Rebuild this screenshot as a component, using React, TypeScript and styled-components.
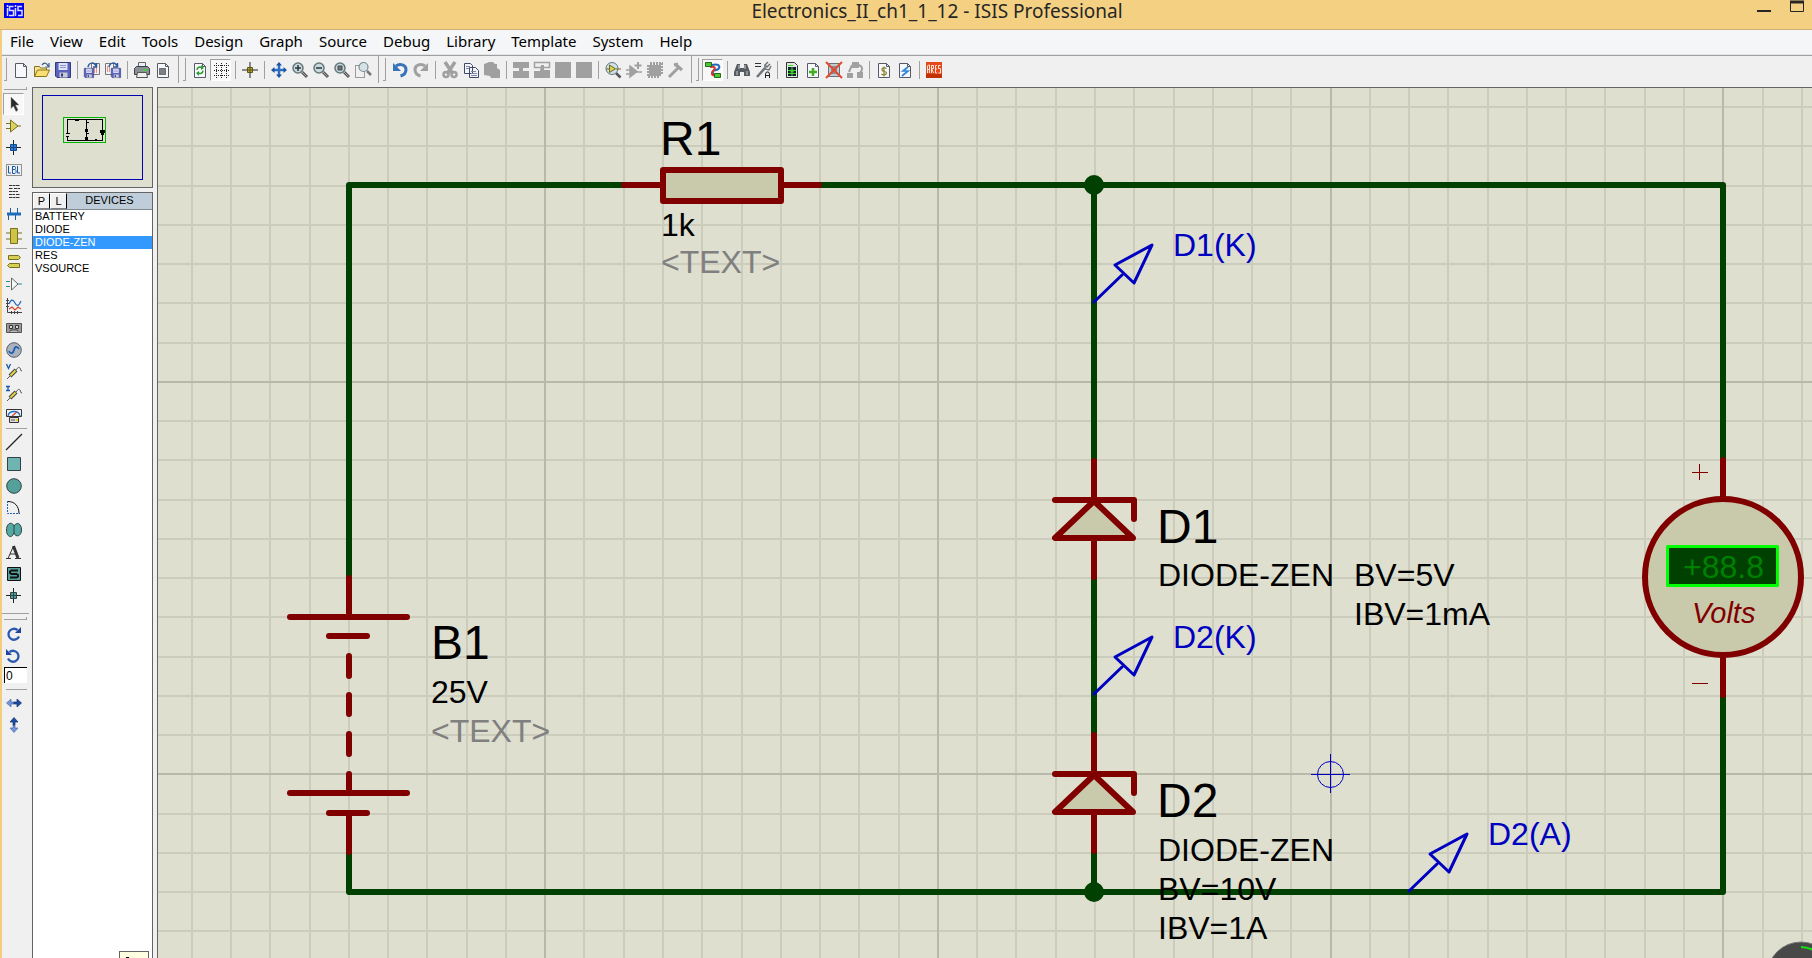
import React from 'react';
import styled, { createGlobalStyle } from 'styled-components';

const GlobalStyle = createGlobalStyle`
  *, *::before, *::after { box-sizing: border-box; }
  body { margin: 0; overflow: hidden; background: #f0f0f0; }
  button { font: inherit; color: inherit; cursor: default; }
`;

const uiFont = `'Noto Sans', 'Open Sans', sans-serif`;
const sheetFont = `'Liberation Sans', Arial, sans-serif`;

/* ---------- window frame ---------- */

const Window = styled.div`
  display: flex;
  flex-direction: column;
  height: 100vh;
  position: relative;
  overflow: hidden;
  font-family: ${uiFont};
  color: #000;
`;

const TitleBar = styled.header`
  display: grid;
  grid-template-columns: 124px 1fr auto;
  align-items: start;
  flex: none;
  height: 30px;
  background: #f4d083;
  border-bottom: 1px solid #ccb078;
`;

const AppIcon = styled.svg`
  display: block;
  margin: 3px 0 0 4px;
`;

const Title = styled.h1`
  margin: 0;
  font-size: 19px;
  line-height: 22px;
  font-weight: 400;
  text-align: center;
  color: #262626;
`;

const WindowButtons = styled.div`
  display: flex;
  width: 62px;
  padding-left: 6px;
  gap: 17px;
`;

const CaptionButton = styled.button`
  width: 16px;
  height: 14px;
  padding: 0;
  border: 0;
  background: none;
  svg { display: block; }
`;

const Body = styled.div`
  display: flex;
  flex-direction: column;
  flex: 1;
  min-height: 0;
  border-left: 2px solid #f4cd7c;
`;

const MenuBar = styled.nav`
  display: flex;
  align-items: flex-start;
  flex: none;
  height: 25px;
  background: #f5f6f7;
  border-bottom: 1px solid #e4e4e4;
`;

const MenuButton = styled.button`
  padding: 0 8px;
  border: 0;
  background: none;
  font-size: 15px;
  line-height: 22px;
`;

/* ---------- toolbars ---------- */

const ToolBar = styled.div`
  display: flex;
  align-items: center;
  flex: none;
  height: 32px;
  padding: 0 0 4px 2px;
  background: #f0f0f0;
  border-top: 1px solid #a0a0a0;
`;

const Grip = styled.span`
  flex: none;
  width: 3px;
  height: 23px;
  margin-right: 3px;
  border: solid #a0a0a0;
  border-width: 0 1px 1px 0;
`;

const Divider = styled.span<{ $wide?: boolean }>`
  flex: none;
  width: 1px;
  height: ${p => (p.$wide ? 27 : 18)}px;
  margin: ${p => (p.$wide ? '0 4px 0 5px' : '0 3px 0 4px')};
  background: #a0a0a0;
`;

const ToolButton = styled.button<{ $pressed?: boolean }>`
  display: flex;
  align-items: center;
  justify-content: center;
  flex: none;
  width: 21px;
  height: 22px;
  padding: 0;
  border: 1px solid;
  border-color: ${p => (p.$pressed ? '#a0a0a0 #fff #fff #a0a0a0' : 'transparent')};
  background: ${p => (p.$pressed ? '#f8f8f8' : 'none')};
  svg { display: block; flex: none; overflow: visible; }
`;

const Workspace = styled.div`
  display: flex;
  flex: 1;
  min-height: 0;
`;

const SideBar = styled.aside`
  display: flex;
  flex-direction: column;
  flex: none;
  width: 30px;
  padding: 0 0 0 1px;
  background: #f0f0f0;
`;

const SideTools = styled.div`
  display: flex;
  flex-direction: column;
`;

const SideGrip = styled.span`
  width: 23px;
  height: 3px;
  margin: 0 0 3px 1px;
  border: solid #a0a0a0;
  border-width: 0 1px 1px 0;
`;

const SideRule = styled.span<{ $full?: boolean }>`
  width: ${p => (p.$full ? 27 : 21)}px;
  height: 1px;
  margin: ${p => (p.$full ? '6px 0 3px -1px' : '1px 0 2px 3px')};
  background: #a0a0a0;
`;

const AngleInput = styled.input`
  width: 23px;
  height: 16px;
  margin: 0 0 5px 1px;
  padding: 0 0 0 1px;
  border: solid #000;
  border-width: 1px 0 0 1px;
  background: #fff;
  font: 12px/14px ${sheetFont};
`;

/* ---------- overview and device list ---------- */

const Panel = styled.section`
  display: flex;
  flex-direction: column;
  flex: none;
  width: 121px;
  margin-right: 4px;
  gap: 4px;
`;

const Overview = styled.div`
  flex: none;
  height: 101px;
  border: 1px solid #646464;
  background: #dedfcf;
  svg { display: block; }
`;

const Devices = styled.div`
  display: flex;
  flex-direction: column;
  flex: 1;
  border: 1px solid #646464;
  border-bottom: 0;
  background: #fff;
  font: 11px/13px ${sheetFont};
`;

const DevicesHead = styled.div`
  display: flex;
  height: 17px;
  background: #bfcddb;
  border-bottom: 1px solid #808890;
`;

const PickButton = styled.button`
  width: 17px;
  padding: 0;
  border: 1px solid;
  border-color: #fff #000 #808080 #fff;
  background: #f0f0f0;
  line-height: 13px;
`;

const DevicesTitle = styled.h2`
  flex: 1;
  margin: 0;
  font-size: 11px;
  font-weight: 400;
  line-height: 15px;
  text-align: center;
`;

const DeviceList = styled.ul`
  flex: 1;
  margin: 0;
  padding: 0;
  list-style: none;
`;

const Device = styled.li<{ $selected?: boolean }>`
  padding-left: 2px;
  background: ${p => (p.$selected ? '#3399ff' : 'none')};
  color: ${p => (p.$selected ? '#fff' : '#000')};
`;

const Hint = styled.div`
  align-self: flex-end;
  width: 30px;
  height: 7px;
  margin-right: 3px;
  border: 1px solid #646464;
  border-bottom: 0;
  background: #ffffe1;
  svg { display: block; }
`;

/* ---------- drawing sheet ---------- */

const Sheet = styled.main`
  flex: 1;
  min-width: 0;
  border: solid #646464;
  border-width: 1px 0 0 1px;
  background: #dedfcf;
  overflow: hidden;
  svg { display: block; }
`;

const Label = styled.text<{ $big?: boolean }>`
  font-family: ${sheetFont};
  font-size: ${p => (p.$big ? 48 : 32)}px;
`;

const Unit = styled.text`
  font-family: ${sheetFont};
  font-size: 29px;
  font-style: italic;
`;

const Gauge = styled.svg`
  position: absolute;
  right: 0;
  bottom: 0;
  display: block;
`;

/* ---------- icons ---------- */

const Icon = ({ children }: { children: React.ReactNode }) => (
  <svg width="16" height="16" viewBox="0 0 16 16" fill="none" aria-hidden="true">{children}</svg>
);

const Lens = ({ children }: { children?: React.ReactNode }) => (
  <Icon>
    <path d="M10 10l5 5" stroke="#555" strokeWidth="3" />
    <path d="M10 10l4.500 4.500" stroke="#aaa" strokeWidth="1" />
    <circle cx="6" cy="6" r="5" fill="#c5dbe0" stroke="#66777d" strokeWidth="1.500" />
    {children}
  </Icon>
);

const Page = ({ children }: { children?: React.ReactNode }) => (
  <Icon>
    <path d="M2.500 1.500h8l3 3v11h-11z" fill="#f6f8fc" stroke="#555a66" />
    <path d="M10.500 1.500v3h3" stroke="#555a66" />
    {children}
  </Icon>
);

const Floppy = ({ x = 0, y = 0, s = 1 }: { x?: number; y?: number; s?: number }) => (
  <g transform={`translate(${x} ${y}) scale(${s})`}>
    <path d="M.5.5h15v15H2L.5 14z" fill="#5b62bd" stroke="#35397f" />
    <path d="M3.500 1h9v7h-9z" fill="#dfe3f6" />
    <path d="M5 3.500h6M5 5.500h6" stroke="#8f97cc" />
    <path d="M4.500 10.500h8v5h-8z" fill="#c8ccd4" />
    <path d="M6 11.500h2v3H6z" fill="#35397f" />
  </g>
);

const Arc = () => <path d="M4 5C5 0 10 0 12 4M12.500 1v4H9" stroke="#2c5b9b" strokeWidth="1.500" />;

const Probe = ({ letter }: { letter: 'V' | 'I' }) => (
  <Icon>
    <path d={letter === 'V' ? 'M.5 0l2 4.500L4.500 0' : 'M0 .5h4M2 .5v4M0 4.500h4'} stroke="#1858a8" strokeWidth="1.300" />
    <path d="M1 15l3-3M10 6c2-3 3-3 4-2s0 3 2 3" stroke="#555" />
    <path d="M4 12l6-6" stroke="#444" strokeWidth="4" />
    <path d="M4.500 11.500l5-5" stroke="#e0d840" strokeWidth="2" />
  </Icon>
);

const Rotate = ({ flip }: { flip?: boolean }) => (
  <Icon>
    <g transform={flip ? 'translate(15 0) scale(-1 1)' : undefined}>
      <path d="M11.500 4A5.500 5.500 0 1 0 13 10.500" stroke="#2a58b0" strokeWidth="2.300" />
      <path d="M15 1v6H9z" fill="#1c459b" />
    </g>
  </Icon>
);

const Resize = ({ vertical }: { vertical?: boolean }) => (
  <Icon>
    <g transform={vertical ? 'rotate(-90 8 8)' : undefined}>
      <path d="M8 7H5V4L.5 8 5 12V9h3z" fill="#7394d8" stroke="#4d6cae" strokeWidth=".7" />
      <path d="M8 7h3V4l4.500 4-4.500 4V9H8z" fill="#1f4aa0" stroke="#15336f" strokeWidth=".7" />
    </g>
  </Icon>
);

const grey = '#a0a0a0';

const icons: Record<string, React.ReactNode> = {
  new: <Page />,
  open: (
    <Icon>
      <path d="M.5 14.500v-10h5l1 1.500h6v3" fill="#f6e49a" stroke="#8a7318" />
      <path d="M.5 14.500l3-6.500h12l-3 6.500z" fill="#f7e071" stroke="#8a7318" />
      <path d="M8 3c2-3 5-2 6 1M15 1v4h-3.500" stroke="#335a86" strokeWidth="1.200" />
    </Icon>
  ),
  save: <Icon><Floppy /></Icon>,
  import: (
    <Icon>
      <path d="M7.500 1.500h8v11h-8z" fill="#f2f2f2" stroke="#777" />
      <path d="M10 6h4M10 8h4M10 10h4" stroke="#d33" strokeDasharray="1 1" />
      <Floppy y={6} s={0.62} /><Arc />
    </Icon>
  ),
  export: (
    <Icon>
      <path d="M.5 1.500h8v11h-8z" fill="#f2f2f2" stroke="#777" />
      <path d="M2 5h4M2 7h4M2 9h4" stroke="#d33" strokeDasharray="1 1" />
      <Floppy x={6} y={6} s={0.62} /><Arc />
    </Icon>
  ),
  print: (
    <Icon>
      <path d="M4.500.5h7v6h-7z" fill="#e8f0fa" stroke="#666" />
      <path d="M.5 6.500l2-2h11l2 2v6H.5z" fill="#8c9096" stroke="#3c3f44" />
      <path d="M3.500 10.500h9l1 5h-11z" fill="#f0f0f0" stroke="#555" />
      <path d="M9 8h4" stroke="#3dd33d" strokeWidth="2" />
    </Icon>
  ),
  area: <Page><path d="M4.500 6.500h6v6h-6z" fill="#7b8087" stroke="#222" strokeDasharray="1 1" /></Page>,
  redraw: (
    <Page>
      <path d="M5 8c0-3 3-3.500 5-2.500M11 8.500c0 3-3 3.500-5 2.500" stroke="#2c9c2c" strokeWidth="1.500" />
      <path d="M9 3l3 3-3 2zM7 9l-3 2 3 3z" fill="#2c9c2c" />
    </Page>
  ),
  grid: (
    <Icon>
      <g stroke="#222" strokeDasharray="1 1" shapeRendering="crispEdges">
        <path d="M1 3.500h15M1 8.500h15M1 13.500h15M3.500 1v15M8.500 1v15M13.500 1v15" />
      </g>
    </Icon>
  ),
  origin: (
    <Icon>
      <path d="M8 0v16M0 8h16" stroke="#222" />
      <path d="M5.500 5.500h5v5h-5z" fill="#b5ab35" stroke="#5a5410" />
      <path d="M8 5v6M5 8h6" stroke="#5a5410" />
    </Icon>
  ),
  pan: (
    <Icon>
      <path d="M8 2v12M2 8h12" stroke="#2d6fc4" strokeWidth="2.500" />
      <path d="M8 0l3 3.500H5zM8 16l3-3.500H5zM0 8l3.500-3v6zM16 8l-3.500-3v6z" fill="#1c54a4" />
    </Icon>
  ),
  zoomIn: <Lens><path d="M3 6h6M6 3v6" stroke="#333" strokeWidth="1.500" /></Lens>,
  zoomOut: <Lens><path d="M3 6h6" stroke="#333" strokeWidth="1.500" /></Lens>,
  zoomAll: <Lens><path d="M4 4h4v4H4z" fill="#777" stroke="#444" /></Lens>,
  zoomArea: (
    <Icon>
      <path d="M.5 3.500h9v12h-9z" stroke="#444" strokeDasharray="1 1" />
      <path d="M12 9l4 4" stroke="#777" strokeWidth="2.500" />
      <circle cx="8.500" cy="5" r="4.500" fill="#d5e2e6" stroke="#7c8b90" strokeWidth="1.200" />
    </Icon>
  ),
  undo: (
    <Icon>
      <path d="M4 4c4-3 10-1 10 3.500 0 3-2 5.500-5.500 6.500" stroke="#3673b8" strokeWidth="3" />
      <path d="M1 1v8h8z" fill="#3673b8" />
    </Icon>
  ),
  redo: (
    <Icon>
      <path d="M12 4C8 1 2 3 2 7.500c0 3 2 5.500 5.500 6.500" stroke={grey} strokeWidth="3" />
      <path d="M15 1v8H7z" fill={grey} />
    </Icon>
  ),
  cut: (
    <Icon>
      <path d="M3 0l8 12M13 0L5 12" stroke={grey} strokeWidth="3.500" />
      <circle cx="4" cy="12.500" r="2.500" stroke={grey} strokeWidth="2.500" />
      <circle cx="12" cy="12.500" r="2.500" stroke={grey} strokeWidth="2.500" />
    </Icon>
  ),
  copy: (
    <Icon>
      <path d="M1.500 1.500h6l2 2v8h-8zM6.500 5.500h6l3 3v7h-9z" fill="#f3f5fb" stroke="#3f4a66" />
      <path d="M3 4.500h4M3 6.500h3M8 9.500h5M8 11.500h6M8 13.500h6" stroke="#7b86a3" />
    </Icon>
  ),
  paste: <Icon><path d="M0 2l3-1 2-1h4l2 2h2v4l3 2v8H7l-1-2-6-1z" fill={grey} /></Icon>,
  blockCopy: <Icon><path d="M0 0h16v6h-6v3h6v7H0V9h6V6H0z" fill={grey} /></Icon>,
  blockMove: (
    <Icon>
      <path d="M.5.5h15v5H.5z" stroke={grey} strokeWidth="1.500" />
      <path d="M7 3h3v5h6v8H0V9h6z" fill={grey} />
    </Icon>
  ),
  block: <Icon><path d="M0 0h16v16H0z" fill={grey} /></Icon>,
  pick: (
    <Icon>
      <path d="M11 11l4.500 4.500" stroke="#555" strokeWidth="2.500" />
      <circle cx="7" cy="6.500" r="6" fill="#cfe2ea" stroke="#60757d" />
      <path d="M4.500 3v7.500l6-3.700z" fill="#d8cf57" stroke="#716b1c" />
      <path d="M1 7h3M11 7h5" stroke="#716b1c" />
    </Icon>
  ),
  makeDevice: (
    <Icon>
      <path d="M4 4l7 5.500L4 15zM0 8h4M0 12h4M10 10h6" fill={grey} stroke={grey} strokeWidth="1.500" />
      <path d="M12 0v7M8.500 3.500h7" stroke={grey} strokeWidth="2" />
    </Icon>
  ),
  packaging: (
    <Icon>
      <path d="M2 3h12v11H2z" fill={grey} />
      <path d="M3 1.500h13M1 14.500h12M1.500 3v12M14.500 1v12" stroke={grey} strokeWidth="3" strokeDasharray="2 1" />
    </Icon>
  ),
  decompose: <Icon><path d="M1 15l9-9M7 2l7 6M6 3l4-1" stroke={grey} strokeWidth="3" /></Icon>,
  autoRoute: (
    <Icon>
      <path d="M7 3c9-2 9 4 4 5s-4 3 0 6" stroke="#1e67bd" strokeWidth="2" />
      <path d="M5 5c7-1 5 2 3 4s-2 4 3 5" stroke="#d6332b" strokeWidth="2" />
      <path d="M.5.500h6v4h-6zM9.500 11.500h6v4h-6z" fill="#54c336" stroke="#1e6e18" />
    </Icon>
  ),
  search: (
    <Icon>
      <path d="M3 2h3v4h4V2h3l3 8v4h-6v-4H6v4H0v-4z" fill="#555b61" />
      <path d="M3 9v4M13 9v4M5 3v4M11 3v4" stroke="#c8ced2" />
    </Icon>
  ),
  property: (
    <Icon>
      <path d="M0 1.500h6M0 4.500h6" stroke="#333" />
      <path d="M2 15l8-9" stroke="#6e757b" strokeWidth="2.500" />
      <path d="M15 2l-3 3-2-2 3-3M10 3v4l4 1 2-4" stroke="#6e757b" strokeWidth="1.500" />
      <path d="M10.500 16v-4l1-2h2l1 2v4M10.500 13.500h4" stroke="#222" />
    </Icon>
  ),
  explorer: (
    <Icon>
      <path d="M2.500.5h8l3 3v12h-11z" fill="#dfe8df" stroke="#333" />
      <path d="M4 5h8v9H4z" fill="#123" />
      <path d="M4 3.500h5M4 8.500h8M4 11.500h8M8 5v9" stroke="#43d22a" />
      <path d="M6.500 7.500h3v3h-3z" fill="#43d22a" />
    </Icon>
  ),
  newSheet: <Page><path d="M8 6v8M4 10h8" stroke="#3fae20" strokeWidth="2.500" /></Page>,
  removeSheet: (
    <Icon>
      <path d="M2.500 1.500h11v13h-11z" fill="#c3cbd0" stroke="#68727a" />
      <path d="M5 5h6M5 8h6M5 11h6" stroke="#555" />
      <path d="M0 0l16 16M16 0L0 16" stroke="#df4a31" strokeWidth="2" />
    </Icon>
  ),
  parent: (
    <Icon>
      <path d="M5 0h7v6H5zM0 11h6v5H0zM10 10h6v6h-6z" fill={grey} />
      <path d="M5 3L2 10M12 3c4 2 4 4 1 8" stroke={grey} strokeWidth="2" />
    </Icon>
  ),
  bom: (
    <Page>
      <path d="M10.500 6.500C8 5 5.500 6 6 8s4.500 1 4.500 3S7 13.500 5.500 12M8 4.500v10" stroke="#8b8125" strokeWidth="1.200" />
    </Page>
  ),
  erc: <Page><path d="M11 5l-5 4h5l-6 5" stroke="#2f87d8" strokeWidth="1.700" /></Page>,
  ares: (
    <Icon>
      <path d="M0 0h16v16H0z" fill="#e6481c" />
      <path d="M0 12h16v4H0z" fill="#c03208" />
      <path d="M1.500 11V4l1-1h1v8M2 7.500h2M5.500 11V3.500h2v3h-2l2 4.500M11 3.500H9.500V11H11M9.500 7H11M14.500 3.500h-2v3h2V11h-2" stroke="#ffe6dc" />
    </Icon>
  ),
  select: <Icon><path d="M5 1l8 8H9.500l2.500 5-2 1.500L7.500 10 5 12.500z" fill="#2a2a2a" stroke="#888" strokeWidth=".5" /></Icon>,
  component: (
    <Icon>
      <path d="M0 5.500h5M0 10.500h5M10 8h5" stroke="#777325" />
      <path d="M4.500 2v12L12 8z" fill="#dad35c" stroke="#77711f" />
    </Icon>
  ),
  junction: (
    <Icon>
      <path d="M7.500 0v15M0 7.500h15" stroke="#222" />
      <path d="M4.500 4.500h6v6h-6z" fill="#2a7bdc" stroke="#174c8a" />
      <path d="M7.500 5v5M5 7.500h5" stroke="#174c8a" />
    </Icon>
  ),
  label: (
    <Icon>
      <path d="M.5 2.500h15v11H.5z" stroke="#333" strokeDasharray="1 1" />
      <path d="M2.500 4v7H5M6.500 4v7.500H9l1-1V8.500L9 7.500H7M7 4.500h2l.5 1v1l-.5 1M11.500 4v7H14" stroke="#1858a8" />
    </Icon>
  ),
  script: (
    <Icon>
      <path d="M3 1.500h11M3 4.500h4M8 4.500h6M3 7.500h9M3 10.500h6M10 10.500h4M3 13.500h11" stroke="#333" strokeDasharray="3 .5" />
    </Icon>
  ),
  bus: (
    <Icon>
      <path d="M4.500 2v7M11.500 2v7M2.500 8v6M9.500 8v6" stroke="#225a99" />
      <path d="M1 8h14" stroke="#1c6bbd" strokeWidth="3" />
    </Icon>
  ),
  subcircuit: (
    <Icon>
      <path d="M0 5h4M0 11h4M12 5h4M12 11h4" stroke="#77711f" />
      <path d="M4.500.5h7v15h-7z" fill="#cdc445" stroke="#77711f" />
    </Icon>
  ),
  terminal: (
    <Icon>
      <path d="M2.500 1.500h10l2 2-2 2h-10z" fill="#d7cf54" stroke="#77711f" />
      <path d="M3.500 9.500h10v4h-10l-2-2z" fill="#d7cf54" stroke="#77711f" />
    </Icon>
  ),
  pin: (
    <Icon>
      <path d="M0 5.500h4M0 10.500h4M12 8h4" stroke="#2f8d8d" />
      <path d="M5.500 2v12L12 8z" fill="#f8f8f8" stroke="#666" />
    </Icon>
  ),
  graph: (
    <Icon>
      <path d="M1.500 0v14.500H16M0 2.500h3M0 5.500h3M0 8.500h3M5.500 13v3M8.500 13v3M11.500 13v3" stroke="#444" />
      <path d="M3 6c2-5 4-5 6-1s4 3 6-2" stroke="#1e67bd" strokeWidth="1.200" />
      <path d="M3 11l3-2 3 3 3-3 3 2" stroke="#d6452b" strokeWidth="1.200" />
    </Icon>
  ),
  tape: (
    <Icon>
      <path d="M.5 3.500h15v9H.5z" fill="#9a9a9a" stroke="#555" />
      <path d="M3.500 5.500h3v3h-3zM9.500 5.500h3v3h-3zM4 11.500l1-1.500h6l1 1.500" fill="#ddd" stroke="#333" />
    </Icon>
  ),
  generator: (
    <Icon>
      <circle cx="8" cy="8" r="7.300" fill="#aab3bd" stroke="#555c66" />
      <path d="M3 9c1 3 4 3 5-1s3-4 5-1" stroke="#1a5cb8" strokeWidth="1.700" />
    </Icon>
  ),
  voltProbe: <Probe letter="V" />,
  ampProbe: <Probe letter="I" />,
  instrument: (
    <Icon>
      <path d="M.5 1.500h15v7h-15z" fill="#eef3f8" stroke="#333" />
      <path d="M2 8c1-6 11-6 12 0" stroke="#2a72c8" strokeWidth="1.300" />
      <path d="M6 8l5-4" stroke="#d6452b" strokeWidth="1.300" />
      <path d="M3.500 9.500h9v5h-9z" fill="#ddd" stroke="#333" />
      <path d="M5 12h4" stroke="#555" /><path d="M10 11h2v2h-2z" fill="#e5d52b" />
    </Icon>
  ),
  line: <Icon><path d="M0 16L16 0" stroke="#222" strokeWidth="1.300" /></Icon>,
  box: <Icon><path d="M1.500 1.500h13v13h-13z" fill="#70b4b2" stroke="#2c4444" /></Icon>,
  circle: <Icon><circle cx="8" cy="8" r="7.300" fill="#55a09b" stroke="#2c4444" /></Icon>,
  arc: (
    <Icon>
      <path d="M1.500 1v12.500H14" stroke="#1e67bd" strokeDasharray="2 1" />
      <path d="M2 1.500c7 0 11 5 11 12" stroke="#111" />
    </Icon>
  ),
  path: (
    <Icon>
      <path d="M8 4C6-1 .5 1 .5 8S6 17 8 11c2 5 7.500 3 7.500-3S11-1 8 4z" fill="#55a8a1" stroke="#2c4444" />
      <path d="M8 4v8" stroke="#2c4444" />
    </Icon>
  ),
  text: (
    <Icon>
      <path d="M2 14.500L7.500 2M0 14.500h5M4 10h6" stroke="#333" />
      <path d="M7.500 2l4.500 12" stroke="#333" strokeWidth="3" /><path d="M9 14.500h6" stroke="#333" />
    </Icon>
  ),
  symbol: (
    <Icon>
      <path d="M1.500 1.500h13v13h-13z" fill="#56a09c" stroke="#111" />
      <path d="M12 4.500H5.500L4 5.500v1.500l1.500 1h5l1.500 1v1.500l-1.500 1H4" stroke="#111" strokeWidth="2" />
    </Icon>
  ),
  marker: (
    <Icon>
      <path d="M7.500 0v15M0 7.500h15" stroke="#222" />
      <path d="M4.500 4.500h6v6h-6z" fill="#56a09c" stroke="#2c4444" /><path d="M7.500 5v5M5 7.500h5" stroke="#2c4444" />
    </Icon>
  ),
  clockwise: <Rotate />,
  anticlockwise: <Rotate flip />,
  mirrorX: <Resize />,
  mirrorY: <Resize vertical />,
};

/* ---------- data ---------- */

const menus = ['File', 'View', 'Edit', 'Tools', 'Design', 'Graph', 'Source', 'Debug', 'Library', 'Template', 'System', 'Help'];

// Each toolbar holds sections, and a thin rule stands between sections.
const toolbars: string[][][] = [
  [['new', 'open', 'save'], ['import', 'export'], ['print', 'area']],
  [['redraw', 'grid'], ['origin'], ['pan', 'zoomIn', 'zoomOut', 'zoomAll', 'zoomArea']],
  [['undo', 'redo'], ['cut', 'copy', 'paste'], ['blockCopy', 'blockMove', 'block', 'block'], ['pick', 'makeDevice', 'packaging', 'decompose']],
  [['autoRoute'], ['search', 'property'], ['explorer', 'newSheet', 'removeSheet', 'parent'], ['bom', 'erc'], ['ares']],
];

const sideTools: string[][] = [
  ['select', 'component', 'junction', 'label', 'script', 'bus', 'subcircuit'],
  ['terminal', 'pin', 'graph', 'tape', 'generator', 'voltProbe', 'ampProbe', 'instrument'],
  ['line', 'box', 'circle', 'arc', 'path', 'text', 'symbol', 'marker'],
];

const pressed = new Set(['grid', 'autoRoute', 'select']);
const devices = ['BATTERY', 'DIODE', 'DIODE-ZEN', 'RES', 'VSOURCE'];

const Tool = ({ name }: { name: string }) => (
  <ToolButton type="button" aria-label={name} $pressed={pressed.has(name)}>{icons[name]}</ToolButton>
);

/* ---------- schematic ---------- */

const WIRE = '#004000';
const PART = '#800000';
const FILL = '#c9c9ab';
const PROBE = '#0000c0';

const gridLines = Array.from({ length: 80 }, (_, i) => i);
const gridX = (i: number) => Math.round(152.5 + i * 39.27);
const gridY = (i: number) => 68 + Math.round((i - 1) * 39.24);

const Grid = () => (
  <g shapeRendering="crispEdges" strokeWidth="2">
    {gridLines.map(i => <path key={`x${i}`} d={`M${gridX(i)} 0v4000`} stroke="#cbccbc" />)}
    {gridLines.map(i => <path key={`y${i}`} d={`M0 ${gridY(i)}h4000`} stroke="#cbccbc" />)}
    {gridLines.filter(i => i % 10 === 0).map(i => <path key={`X${i}`} d={`M${gridX(i)} 0v4000`} stroke="#b8b9a9" />)}
    {gridLines.filter(i => i % 10 === 9).map(i => <path key={`Y${i}`} d={`M0 ${gridY(i)}h4000`} stroke="#b8b9a9" />)}
  </g>
);

const Zener = ({ y }: { y: number }) => (
  <g transform={`translate(1094 ${y})`} stroke={PART} strokeWidth="6" strokeLinecap="round" strokeLinejoin="round">
    <path d="M0-39V0M0 39V77" fill="none" />
    <path d="M0 1L-39 38H39Z" fill={FILL} />
    <path d="M-39 0H40V19" fill="none" />
  </g>
);

const VoltageProbe = ({ x, y, name }: { x: number; y: number; name: string }) => (
  <g transform={`translate(${x} ${y})`}>
    <path d="M0 0L28-27M21-37L58-57L40-19Z" fill="none" stroke={PROBE} strokeWidth="3" strokeLinecap="round" strokeLinejoin="round" />
    <Label x="79" y="-46" fill={PROBE}>{name}</Label>
  </g>
);

const Schematic = () => (
  <svg width="100%" height="100%" role="img" aria-label="Schematic">
    {/* sheet coordinates are measured from the window corner */}
    <g transform="translate(-158 -88)">
      <Grid />
      <g fill="none" stroke={WIRE} strokeWidth="6" strokeLinecap="round" strokeLinejoin="round">
        <path d="M349 577V185H624M820 185H1723V459M1094 185V459M1094 577V735M1094 852V892M349 852V892H1723V695" />
      </g>
      <circle cx="1094" cy="185" r="10" fill={WIRE} />
      <circle cx="1094" cy="892" r="10" fill={WIRE} />

      <g stroke={PART} strokeWidth="6" strokeLinecap="round" strokeLinejoin="round">
        <path d="M624 185H663M781 185H819" />
        <path d="M663 170H781V201H663Z" fill={FILL} />
        <path d="M349 578V617M290 617H407M329 636H367M349 656V676M349 695V714M349 734V754M349 774V793M290 793H407M329 813H367M349 813V852" />
      </g>
      <Zener y={500} />
      <Zener y={774} />

      <g stroke={PART} strokeWidth="6" strokeLinecap="round">
        <circle cx="1723" cy="577" r="78" fill={FILL} />
        <path d="M1723 460V499M1723 655V695" />
      </g>
      <path d="M1692 472.500h16M1699.500 464v16M1692 683.500h16" stroke={PART} />
      <path d="M1667.500 546.500h110v39h-110z" fill={WIRE} stroke="#00ff00" strokeWidth="3" strokeLinejoin="round" />
      <Label x="1683" y="578" fill="#008000">+88.8</Label>
      <Unit x="1692" y="623" fill={PART}>Volts</Unit>

      <g fill="none" stroke={PROBE}>
        <circle cx="1330.500" cy="774.500" r="13" />
        <path d="M1311 774.500h39M1330.500 754v39" />
      </g>

      <Label $big x="660" y="155">R1</Label>
      <Label x="661" y="236">1k</Label>
      <Label x="661" y="273" fill="#808080">&lt;TEXT&gt;</Label>
      <Label $big x="431" y="659">B1</Label>
      <Label x="431" y="703">25V</Label>
      <Label x="431" y="742" fill="#808080">&lt;TEXT&gt;</Label>
      <Label $big x="1157" y="543">D1</Label>
      <Label x="1158" y="586">DIODE-ZEN</Label>
      <Label x="1354" y="586">BV=5V</Label>
      <Label x="1354" y="625">IBV=1mA</Label>
      <Label $big x="1157" y="817">D2</Label>
      <Label x="1158" y="861">DIODE-ZEN</Label>
      <Label x="1158" y="900">BV=10V</Label>
      <Label x="1158" y="939">IBV=1A</Label>

      <VoltageProbe x={1094} y={302} name="D1(K)" />
      <VoltageProbe x={1094} y={694} name="D2(K)" />
      <VoltageProbe x={1409} y={891} name="D2(A)" />
    </g>
  </svg>
);

const Thumbnail = () => (
  <svg width="119" height="99" fill="none" shapeRendering="crispEdges" role="img" aria-label="Sheet overview">
    <path d="M9.500 7.500h100v84h-100z" stroke="#0000b4" />
    <path d="M30.500 29.500h42v25h-42z" stroke="#00b400" />
    <path d="M34.500 45V31.500h35v10M34.500 49v3.500h35v-6M53.500 32v20M42 32.500h4M33 45.500h4M33 48.500h3" stroke="#000" />
    <path d="M52 41h3v3h-3zM52 49h3v3h-3zM67 42h5v3h-1v2h-3v-2h-1zM62 51h2v1h-2zM54 34h2v1h-2zM54 45h2v1h-2z" fill="#000" />
  </svg>
);

export default function App() {
  return (
    <Window>
      <GlobalStyle />
      <TitleBar>
        <AppIcon width="20" height="15" viewBox="0 0 20 15" fill="none" aria-hidden="true">
          <path d="M0 0h20v15H0z" fill="#0000f0" />
          <path d="M3.500 2v2M3.500 5v8M9.500 3.500h-4v4h4v5H5M11.500 2v2M11.500 5v8M18 3.500h-4v4h4v5h-4" stroke="#d8dcff" strokeWidth="1.500" />
        </AppIcon>
        <Title>Electronics_II_ch1_1_12 - ISIS Professional</Title>
        <WindowButtons>
          <CaptionButton type="button" aria-label="Minimize">
            <svg width="16" height="14"><path d="M1 10h14v2H1z" fill="#262626" /></svg>
          </CaptionButton>
          <CaptionButton type="button" aria-label="Maximize">
            <svg width="16" height="14" fill="none"><path d="M1.500 1v10.500h13V1" stroke="#262626" /><path d="M1 2h14" stroke="#262626" strokeWidth="3" /></svg>
          </CaptionButton>
        </WindowButtons>
      </TitleBar>
      <Body>
        <MenuBar>
          {menus.map(m => <MenuButton key={m} type="button">{m}</MenuButton>)}
        </MenuBar>
        <ToolBar>
          {toolbars.map((sections, b) => (
            <React.Fragment key={b}>
              {b > 0 && <Divider $wide />}
              <Grip />
              {sections.map((names, s) => (
                <React.Fragment key={s}>
                  {s > 0 && <Divider />}
                  {names.map((name, i) => <Tool key={i} name={name} />)}
                </React.Fragment>
              ))}
            </React.Fragment>
          ))}
        </ToolBar>
        <Workspace>
          <SideBar>
            <SideGrip />
            <SideTools>
              {sideTools.map((names, s) => (
                <React.Fragment key={s}>
                  {s > 0 && <SideRule />}
                  {names.map(name => <Tool key={name} name={name} />)}
                </React.Fragment>
              ))}
              <SideRule $full />
              <SideGrip />
              <Tool name="clockwise" />
              <Tool name="anticlockwise" />
              <AngleInput aria-label="Rotation angle" defaultValue="0" />
              <SideRule />
              <Tool name="mirrorX" />
              <Tool name="mirrorY" />
            </SideTools>
          </SideBar>
          <Panel>
            <Overview><Thumbnail /></Overview>
            <Devices>
              <DevicesHead>
                <PickButton type="button">P</PickButton>
                <PickButton type="button">L</PickButton>
                <DevicesTitle>DEVICES</DevicesTitle>
              </DevicesHead>
              <DeviceList>
                {devices.map(d => <Device key={d} $selected={d === 'DIODE-ZEN'}>{d}</Device>)}
              </DeviceList>
              <Hint><svg width="28" height="6"><path d="M6 5h3v1H6z" /></svg></Hint>
            </Devices>
          </Panel>
          <Sheet><Schematic /></Sheet>
        </Workspace>
      </Body>
      <Gauge width="42" height="18" aria-hidden="true">
        <circle cx="31" cy="36" r="34" fill="#484848" stroke="#777" />
        <path d="M31 7a29 29 0 0 1 14 4" fill="none" stroke="#14e014" strokeWidth="2" />
      </Gauge>
    </Window>
  );
}
